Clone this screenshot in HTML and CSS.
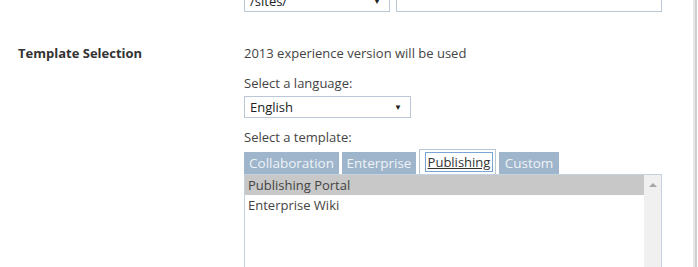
FILE: index.html
```html
<!DOCTYPE html>
<html lang="en">

<head>
    <meta charset="UTF-8">
    <meta name="viewport" content="width=device-width, initial-scale=1.0">
    <title>New Site Collection</title>
    <link rel="stylesheet" href="styles.css">
</head>

<body>
    <div class="page">
        <div class="row urlRow">
            <div class="label"></div>
            <div class="field inline">
                <div class="dropdown url">/sites/<span class="arrow">&#9660;</span></div>
                <div class="textbox"></div>
            </div>
        </div>

        <div class="row">
            <div class="label"><strong>Template Selection</strong></div>
            <div class="field">
                <p class="note">2013 experience version will be used</p>
                <p class="caption">Select a language:</p>
                <div class="dropdown lang">English<span class="arrow">&#9660;</span></div>
                <p class="caption second">Select a template:</p>
                <div class="tabs">
                    <span class="tab collab">Collaboration</span>
                    <span class="tab enter">Enterprise</span>
                    <span class="tab active"><a href="#">Publishing</a></span>
                    <span class="tab custom">Custom</span>
                </div>
                <div class="listbox">
                    <div class="items">
                        <div class="item selected">Publishing Portal</div>
                        <div class="item">Enterprise Wiki</div>
                    </div>
                    <div class="scroll"><span class="up"></span></div>
                </div>
            </div>
        </div>
    </div>
    <div class="edge"></div>
</body>

</html>
```

FILE: styles.css
```css
body {
    margin: 0;
    background-color: white;
    color: #444;
    font-family: "Open Sans", sans-serif;
    font-size: 13px;
    overflow: hidden;
}

.page {
    margin-top: -10px;
}

.row {
    display: flex;
}

.label {
    width: 226px;
    padding-left: 18px;
    padding-top: 32px;
    color: #333;
}

.urlRow .label {
    padding-top: 0;
}

.field {
    flex: 1;
}

.inline {
    display: flex;
    gap: 6px;
}

p {
    margin: 0;
}

.note {
    margin-top: 31px;
    line-height: 20px;
}

.caption {
    margin-top: 11px;
    line-height: 18px;
}

.caption.second {
    margin-top: 10px;
}

.dropdown {
    border: 1px solid #b9c7d6;
    height: 20px;
    line-height: 20px;
    padding-left: 5px;
    position: relative;
    color: #222;
    box-sizing: border-box;
}

.arrow {
    position: absolute;
    right: 8px;
    top: 0;
    font-size: 8px;
    color: #222;
}

.url {
    width: 146px;
    height: 22px;
}

.textbox {
    width: 266px;
    height: 22px;
    border: 1px solid #b9c7d6;
    box-sizing: border-box;
}

.lang {
    width: 167px;
    height: 22px;
    line-height: 20px;
    margin-top: 4px;
}

.tabs {
    display: flex;
    align-items: flex-end;
    gap: 3px;
    margin-top: 3px;
    height: 25px;
}

.tab {
    background-color: #9fb5cb;
    color: #eef3f8;
    height: 22px;
    line-height: 22px;
    text-align: center;
    box-sizing: border-box;
    font-size: 13.5px;
}

.collab {
    width: 95px;
}

.enter {
    width: 74px;
}

.custom {
    width: 60px;
}

.tab.active {
    width: 77px;
    background-color: white;
    border: 1px solid #b6c6d6;
    border-bottom: none;
    height: 25px;
    padding: 2px 2px 0 5px;
    line-height: 18px;
    font-size: 13px;
}

.tab.active a {
    color: #333;
    display: block;
    border: 1px solid #7aa4d4;
    line-height: 18px;
}

.listbox {
    width: 418px;
    height: 110px;
    border: 1px solid #c4d2e0;
    box-sizing: border-box;
    display: flex;
}

.items {
    flex: 1;
}

.item {
    height: 20px;
    line-height: 20px;
    padding-left: 3px;
    color: #444;
}

.item.selected {
    background-color: #c8c8c8;
}

.scroll {
    width: 17px;
    background-color: #f0f0f0;
    position: relative;
}

.up {
    position: absolute;
    left: 5px;
    top: 8px;
    border-left: 4px solid transparent;
    border-right: 4px solid transparent;
    border-bottom: 4px solid #a6a6a6;
}

.edge {
    position: fixed;
    top: 0;
    right: 1px;
    width: 4px;
    height: 100%;
    background: linear-gradient(to right, #e6e6e6 0, #e6e6e6 2px, #cfcfcf 2px);
}
```
